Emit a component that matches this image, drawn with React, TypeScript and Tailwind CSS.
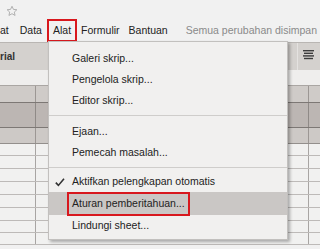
import React from 'react';

type MenuItem = {label: string; h: string; checked?: boolean; boxed?: boolean};

const GROUPS: MenuItem[][] = [
  [
    {label: 'Galeri skrip...', h: 'h-[21px]'},
    {label: 'Pengelola skrip...', h: 'h-[21px]'},
    {label: 'Editor skrip...', h: 'h-[21px]'},
  ],
  [
    {label: 'Ejaan...', h: 'h-[21px]'},
    {label: 'Pemecah masalah...', h: 'h-[21px]'},
  ],
  [
    {label: 'Aktifkan pelengkapan otomatis', h: 'h-[20px]', checked: true},
    {label: 'Aturan pemberitahuan...', h: 'h-[23px]', boxed: true},
    {label: 'Lindungi sheet...', h: 'h-[21px]'},
  ],
];

// heights of the plain spreadsheet rows under the header bands
const ROW_HEIGHTS = ['h-[12px]', 'h-[13px]', 'h-[13px]', 'h-[13px]', 'h-[13px]', 'h-[13px]', 'h-[12px]', 'h-[12px]'];

function Star() {
  return (
    <svg width="12" height="12" viewBox="0 0 24 24" fill="none" stroke="#a9a9a9" strokeWidth="1.8">
      <path d="M12 2.5l2.9 6.3 6.8.7-5.1 4.6 1.5 6.8L12 17.4l-6.1 3.5 1.5-6.8-5.1-4.6 6.8-.7z" />
    </svg>
  );
}

function Check() {
  return (
    <svg width="10" height="9" viewBox="0 0 10 9" fill="none" stroke="#333" strokeWidth="1.6">
      <path d="M0.8 4.6L3.4 7.4L9 0.8" />
    </svg>
  );
}

function GridRow({h, bg, line, vline}: {h: string; bg: string; line: string; vline: string}) {
  return (
    <div className={`flex ${h} ${bg} border-b ${line}`}>
      <div className={`w-[36px] border-r ${vline}`} />
      <div className={`w-[273px] border-r ${vline}`} />
      <div className="flex-1" />
    </div>
  );
}

export default function App() {
  return (
    <div className="relative w-[320px] h-[249px] overflow-hidden bg-[#f1f1f1] font-['Liberation_Sans',Arial,sans-serif]">
      {/* title strip */}
      <div className="h-[19px] pl-[6px] pt-[5px]">
        <Star />
      </div>

      {/* menu bar */}
      <div className="h-[23px] flex items-center text-[10.5px] text-[#222] whitespace-nowrap">
        <span>at</span>
        <span className="ml-[11px]">Data</span>
        <span className="ml-[5px] h-[23px] flex items-center border-2 border-[#d8181e] px-[4px]">Alat</span>
        <span className="ml-[4px]">Formulir</span>
        <span className="ml-[9px]">Bantuan</span>
        <span className="ml-[18px] text-[#8a8a8a]">Semua perubahan disimpan</span>
      </div>

      {/* toolbar */}
      <div className="h-[28px] flex justify-between bg-[#d4d1ce] border-t border-[#b9b6b3]">
        <div className="w-[48px] pt-[6px] text-[10px] font-bold text-[#333]">rial</div>
        <div className="w-[23px] border-l border-[#e4e2e0] pl-[5px] pt-[7px]">
          <svg width="11" height="10" viewBox="0 0 11 10" fill="#3c3c3c">
            <rect x="0" y="0" width="11" height="1.4" />
            <rect x="1" y="2.6" width="9" height="1.4" />
            <rect x="0" y="5.2" width="11" height="1.4" />
            <rect x="1" y="7.8" width="9" height="1.4" />
          </svg>
        </div>
      </div>

      {/* sheet */}
      <div className="h-[16px] bg-[#efeeed] border-b border-[#aaa6a3]" />
      <GridRow h="h-[17px]" bg="bg-[#cfcbc8]" line="border-[#7d7875]" vline="border-[#9c9794]" />
      <GridRow h="h-[25px]" bg="bg-[#bcb6b3]" line="border-[#7d7875]" vline="border-[#8f8a87]" />
      <GridRow h="h-[16px]" bg="bg-[#cdc9c6]" line="border-[#938f8c]" vline="border-[#9c9794]" />
      {ROW_HEIGHTS.map((h, i) => (
        <GridRow key={i} h={h} bg="bg-[#f1f1f0]" line="border-[#bdbab8]" vline="border-[#a8a5a3]" />
      ))}

      {/* Alat dropdown */}
      <div className="absolute left-[48px] top-[41px] w-[240px] h-[199px] bg-[#f1f0ef] border border-[#c2c0be] shadow-[2px_2px_3px_rgba(0,0,0,0.3)] pt-[6px] text-[10.5px] text-[#222] whitespace-nowrap">
        {GROUPS.map((group, gi) => (
          <div key={gi}>
            {gi > 0 && (
              <div className={`h-px bg-[#cfcdcb] mt-[4px] ${gi === 1 ? 'mb-[5px]' : 'mb-[4px]'}`} />
            )}
            {group.map((item) => (
              <div
                key={item.label}
                className={`relative flex items-center pl-[23px] ${item.h} ${item.boxed ? 'bg-[#cac7c5]' : ''}`}
              >
                {item.checked && (
                  <span className="absolute left-[6px] top-[6px]">
                    <Check />
                  </span>
                )}
                {item.boxed ? (
                  <span className="ml-[-5px] h-[24px] flex items-center border-2 border-[#d8181e] pl-[3px] pr-[3px]">
                    {item.label}
                  </span>
                ) : (
                  <span>{item.label}</span>
                )}
              </div>
            ))}
          </div>
        ))}
      </div>
    </div>
  );
}
